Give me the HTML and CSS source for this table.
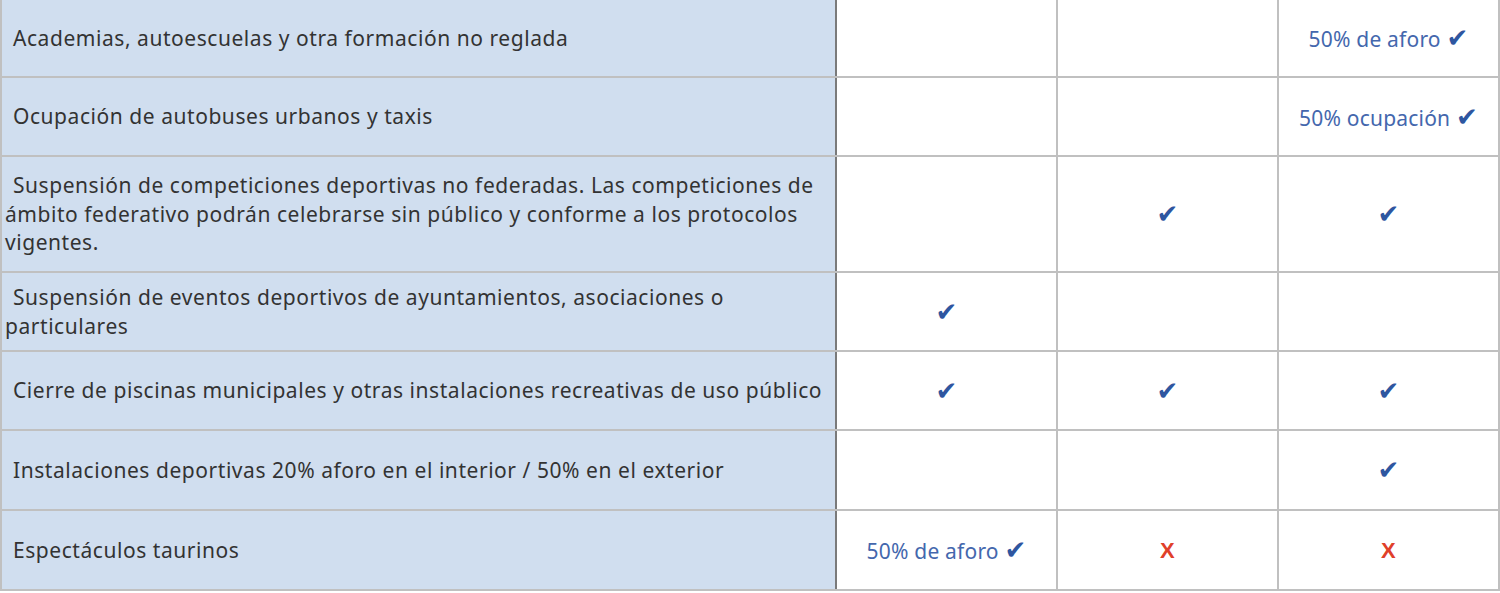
FILE: index.html
```html
<!DOCTYPE html>
<html lang="es">
<head>
<meta charset="utf-8">
<link rel="stylesheet" href="styles.css">
</head>
<body>
<table class="grid">
  <colgroup>
    <col class="c-label">
    <col class="c-val">
    <col class="c-val">
    <col class="c-val">
  </colgroup>
  <tbody>
    <tr class="r1">
      <td class="label ind">Academias, autoescuelas y otra formación no reglada</td>
      <td></td>
      <td></td>
      <td class="val"><span class="note">50% de aforo</span> <span class="chk">✔</span></td>
    </tr>
    <tr class="r2">
      <td class="label ind">Ocupación de autobuses urbanos y taxis</td>
      <td></td>
      <td></td>
      <td class="val"><span class="note">50% ocupación</span> <span class="chk">✔</span></td>
    </tr>
    <tr class="r3">
      <td class="label ind">Suspensión de competiciones deportivas no federadas. Las competiciones de ámbito federativo podrán celebrarse sin público y conforme a los protocolos vigentes.</td>
      <td></td>
      <td class="val"><span class="chk">✔</span></td>
      <td class="val"><span class="chk">✔</span></td>
    </tr>
    <tr class="r4">
      <td class="label ind">Suspensión de eventos deportivos de ayuntamientos, asociaciones o particulares</td>
      <td class="val"><span class="chk">✔</span></td>
      <td></td>
      <td></td>
    </tr>
    <tr class="r5">
      <td class="label ind">Cierre de piscinas municipales y otras instalaciones recreativas de uso público</td>
      <td class="val"><span class="chk">✔</span></td>
      <td class="val"><span class="chk">✔</span></td>
      <td class="val"><span class="chk">✔</span></td>
    </tr>
    <tr class="r6">
      <td class="label ind">Instalaciones deportivas 20% aforo en el interior / 50% en el exterior</td>
      <td></td>
      <td></td>
      <td class="val"><span class="chk">✔</span></td>
    </tr>
    <tr class="r7">
      <td class="label ind">Espectáculos taurinos</td>
      <td class="val"><span class="note">50% de aforo</span> <span class="chk">✔</span></td>
      <td class="val"><span class="x">X</span></td>
      <td class="val"><span class="x">X</span></td>
    </tr>
  </tbody>
</table>
</body>
</html>
```

FILE: styles.css
```css
html, body {
  margin: 0;
  padding: 0;
  background: #ffffff;
}

.grid {
  border-collapse: collapse;
  table-layout: fixed;
  width: 1498px;
  font-family: "Noto Sans", Lato, sans-serif;
  font-size: 21px;
  letter-spacing: 0.55px;
  color: #333333;
}

.c-label { width: 835px; }
.c-val { width: 221px; }

.grid td {
  border: 2px solid #c0c0c0;
  padding: 0 2px 0 3px;
  vertical-align: middle;
  background: #ffffff;
}

.grid tr.r1 td { border-top: none; }

.grid td.label {
  background: #d0deef;
  border-right: 2px solid #7a7a7a;
  line-height: 28.5px;
}

.grid td.ind { text-indent: 8px; }

.grid td.val {
  text-align: center;
  padding: 0;
  letter-spacing: 0.2px;
}

.r1 { height: 77px; }
.r2 { height: 79px; }
.r3 { height: 116px; }
.r4 { height: 79px; }
.r5 { height: 79px; }
.r6 { height: 80px; }
.r7 { height: 80px; }

.note {
  color: #4467ad;
  font-size: 21px;
}

.chk {
  color: #2e56a0;
  font-family: "DejaVu Sans", sans-serif;
  font-size: 26px;
}

.x {
  color: #e0402a;
  font-family: "Liberation Sans", sans-serif;
  font-weight: bold;
  font-size: 22px;
}
```
